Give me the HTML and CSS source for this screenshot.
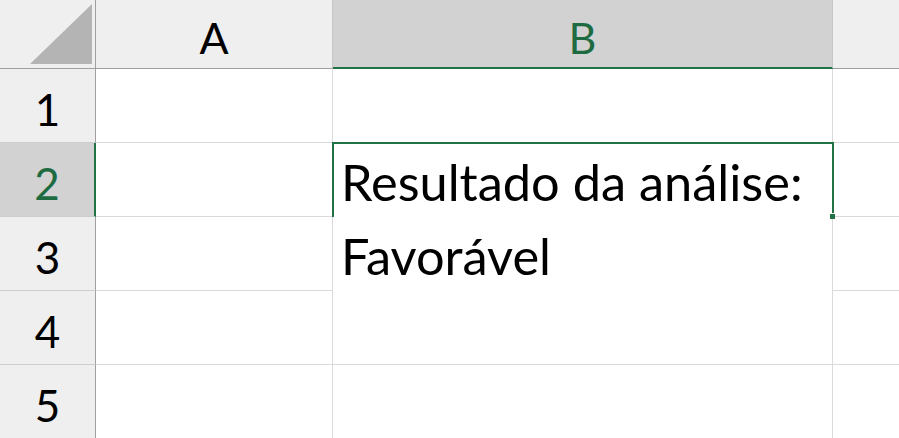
FILE: index.html
```html
<!DOCTYPE html>
<html lang="pt">
<head>
<meta charset="utf-8">
<title>Planilha</title>
<link rel="stylesheet" href="styles.css">
</head>
<body>
<div class="sheet">
  <div class="corner"><svg class="tri" width="96" height="69" viewBox="0 0 96 69"><polygon points="30,64 92,64 92,4" fill="#b4b4b4"/></svg></div>
  <div class="colhead">A</div>
  <div class="colhead sel">B</div>
  <div class="colhead last"></div>

  <div class="rowhead">1</div>
  <div class="cell"></div>
  <div class="cell"></div>
  <div class="cell last"></div>

  <div class="rowhead sel">2</div>
  <div class="cell"></div>
  <div class="cell text">Resultado da análise:<br>Favorável</div>
  <div class="cell last"></div>

  <div class="rowhead">3</div>
  <div class="cell"></div>
  <div class="cell last"></div>

  <div class="rowhead">4</div>
  <div class="cell"></div>
  <div class="cell last"></div>

  <div class="rowhead">5</div>
  <div class="cell"></div>
  <div class="cell"></div>
  <div class="cell last"></div>

  <div class="selection"></div>
</div>
</body>
</html>
```

FILE: styles.css
```css
html, body {
  margin: 0;
  padding: 0;
  background: #ffffff;
  overflow: hidden;
}

.sheet {
  display: grid;
  grid-template-columns: 96px 237px 500px 1fr;
  grid-template-rows: 69px repeat(5, 74px);
  width: 899px;
  height: 438px;
  font-family: "Lato", "Open Sans", sans-serif;
  color: #000;
}

.corner {
  background: #efefef;
  border-right: 1px solid #9f9f9f;
  border-bottom: 1px solid #9f9f9f;
  box-sizing: border-box;
}

.tri {
  display: block;
}

.colhead {
  background: #efefef;
  border-right: 1px solid #c6c6c6;
  border-bottom: 1px solid #9f9f9f;
  box-sizing: border-box;
  display: flex;
  align-items: center;
  justify-content: center;
  font-size: 43px;
  padding-top: 6px;
}

.colhead.sel {
  background: #d2d2d2;
  color: #1e6b41;
  border-bottom: 2px solid #217346;
  padding-top: 7px;
}

.colhead.last {
  border-right: none;
}

.rowhead {
  grid-column: 1;
  background: #efefef;
  border-right: 1px solid #9f9f9f;
  border-bottom: 1px solid #cdcdcd;
  box-sizing: border-box;
  display: flex;
  align-items: center;
  justify-content: center;
  font-size: 44px;
  padding-top: 6px;
}

.rowhead.sel {
  background: #d2d2d2;
  color: #1e6b41;
  border-right: 2px solid #217346;
}

.cell {
  border-right: 1px solid #dadada;
  border-bottom: 1px solid #dadada;
  box-sizing: border-box;
}

.cell.last {
  border-right: none;
}

.cell.text {
  grid-row: 3 / span 3;
  grid-column: 3;
  font-size: 50.5px;
  line-height: 74px;
  padding: 2px 0 0 8px;
  white-space: nowrap;
}

.selection {
  grid-row: 3;
  grid-column: 3;
  margin: -1px -1px 0 -1px;
  border: 2px solid #217346;
  border-bottom: none;
  position: relative;
  box-sizing: border-box;
}

.selection::after {
  content: "";
  position: absolute;
  right: -3px;
  bottom: -2px;
  width: 5px;
  height: 5px;
  background: #217346;
  border-top: 1px solid #fff;
}
```
